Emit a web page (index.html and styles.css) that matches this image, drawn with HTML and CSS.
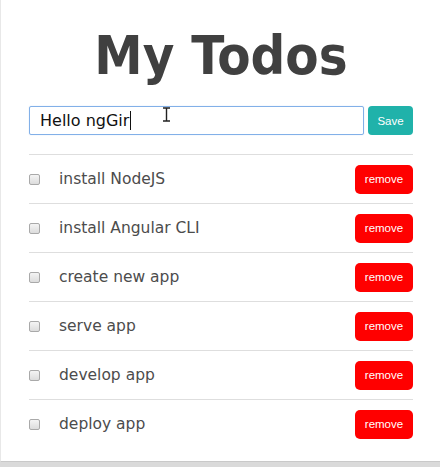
FILE: index.html
```html
<!DOCTYPE html>
<html>
<head>
<meta charset="utf-8">
<link rel="stylesheet" href="styles.css">
</head>
<body>
<div class="card">
  <div class="container">
    <h1 class="title">My Todos</h1>
    <div class="form">
      <div class="field">Hello ngGir<span class="caret"></span></div>
      <button class="save">Save</button>
      <svg class="ibeam" width="9" height="15" viewBox="0 0 9 15"><path d="M1 1h7M4.5 1v13M1 14h7" stroke="#222" stroke-width="1.4" fill="none"/></svg>
    </div>
    <ul class="list">
      <li class="row"><input type="checkbox" class="check"><span class="label">install NodeJS</span><button class="remove">remove</button></li>
      <li class="row"><input type="checkbox" class="check"><span class="label">install Angular CLI</span><button class="remove">remove</button></li>
      <li class="row"><input type="checkbox" class="check"><span class="label">create new app</span><button class="remove">remove</button></li>
      <li class="row"><input type="checkbox" class="check"><span class="label">serve app</span><button class="remove">remove</button></li>
      <li class="row"><input type="checkbox" class="check"><span class="label">develop app</span><button class="remove">remove</button></li>
      <li class="row"><input type="checkbox" class="check"><span class="label">deploy app</span><button class="remove">remove</button></li>
    </ul>
  </div>
</div>
</body>
</html>
```
FILE: styles.css
```css
html { background: #dadada; }
body { margin: 0; font-family: "DejaVu Sans", Verdana, sans-serif; }
.card {
  width: 439px;
  height: 461px;
  background: #fff;
  border-left: 1px solid #e8e8e8;
  border-bottom: 1px solid #c9c9c9;
}
.container {
  padding: 24px 28px 0 28px;
  width: 384px;
}
.title {
  margin: 0;
  text-align: center;
  font-family: "DejaVu Sans Condensed", "DejaVu Sans", sans-serif;
  font-size: 54px;
  line-height: 64px;
  font-weight: bold;
  color: #404040;
}
.form {
  position: relative;
  margin-top: 18px;
  display: flex;
  gap: 4px;
  align-items: center;
}
.field {
  flex: 1;
  height: 27px;
  box-sizing: content-box;
  border: 1px solid #82b0e8;
  border-radius: 2px;
  box-shadow: 0 0 1px #a9c9f0;
  padding: 0 10px;
  display: flex;
  align-items: center;
  font-size: 16px;
  color: #111;
}
.caret {
  display: inline-block;
  width: 1px;
  height: 19px;
  background: #111;
  margin-left: 1px;
}
.ibeam { position: absolute; left: 133px; top: 1px; }
.save {
  width: 45px;
  height: 29px;
  border: none;
  border-radius: 4px;
  background: #20b2aa;
  color: #fff;
  font-family: "Liberation Sans", Arial, sans-serif;
  font-size: 11.5px;
  padding: 0;
}
.list {
  list-style: none;
  margin: 19px 0 0 0;
  padding: 0;
}
.row {
  display: flex;
  align-items: center;
  height: 48px;
  border-top: 1px solid #dedede;
}
.check {
  appearance: none;
  -webkit-appearance: none;
  margin: 0 19px 0 0;
  width: 11px;
  height: 11px;
  border: 1px solid #a9a9a9;
  border-radius: 2px;
  background: linear-gradient(#f4f4f4, #dcdcdc);
  box-sizing: border-box;
}
.label {
  flex: 1;
  font-size: 15.5px;
  color: #4c4c4c;
}
.remove {
  width: 58px;
  height: 29px;
  border: none;
  border-radius: 5px;
  background: #ff0000;
  color: #fff;
  font-family: "Liberation Sans", Arial, sans-serif;
  font-size: 11.5px;
  padding: 0;
}
```
